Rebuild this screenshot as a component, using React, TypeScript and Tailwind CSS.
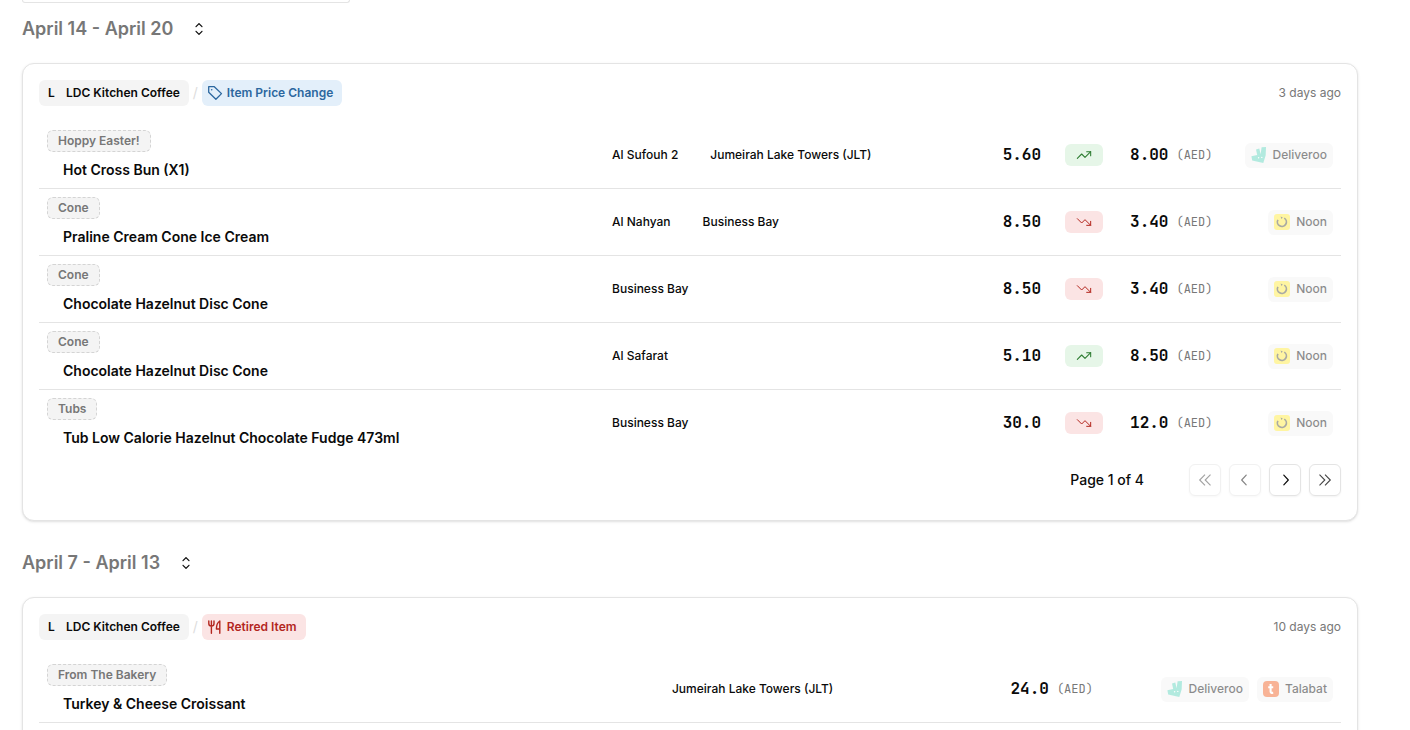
import type { ReactNode } from 'react'
import { RxCaretSort, RxChevronLeft, RxChevronRight } from 'react-icons/rx'
import { TrendingDown, TrendingUp } from 'lucide-react'

type Market = 'Deliveroo' | 'Noon' | 'Talabat'

type Item = {
  category: string
  name: string
  areas: string[]
  price: string
  newPrice?: string
  trend?: 'up' | 'down'
  markets: Market[]
}

const priceChanges: Item[] = [
  { category: 'Hoppy Easter!', name: 'Hot Cross Bun (X1)', areas: ['Al Sufouh 2', 'Jumeirah Lake Towers (JLT)'], price: '5.60', newPrice: '8.00', trend: 'up', markets: ['Deliveroo'] },
  { category: 'Cone', name: 'Praline Cream Cone Ice Cream', areas: ['Al Nahyan', 'Business Bay'], price: '8.50', newPrice: '3.40', trend: 'down', markets: ['Noon'] },
  { category: 'Cone', name: 'Chocolate Hazelnut Disc Cone', areas: ['Business Bay'], price: '8.50', newPrice: '3.40', trend: 'down', markets: ['Noon'] },
  { category: 'Cone', name: 'Chocolate Hazelnut Disc Cone', areas: ['Al Safarat'], price: '5.10', newPrice: '8.50', trend: 'up', markets: ['Noon'] },
  { category: 'Tubs', name: 'Tub Low Calorie Hazelnut Chocolate Fudge 473ml', areas: ['Business Bay'], price: '30.0', newPrice: '12.0', trend: 'down', markets: ['Noon'] },
]

const retiredItems: Item[] = [
  { category: 'From The Bakery', name: 'Turkey & Cheese Croissant', areas: ['Jumeirah Lake Towers (JLT)'], price: '24.0', markets: ['Deliveroo', 'Talabat'] },
]

function TagIcon() {
  return (
    <svg viewBox="0 0 16 16" className="size-4" fill="none" stroke="currentColor" strokeWidth="1.3" strokeLinejoin="round" aria-hidden="true">
      <path d="M1.7 1.7h5.6l7.2 6.9-5.6 5.7-7.2-7z" />
      <circle cx="4.7" cy="4.7" r="0.8" fill="currentColor" stroke="none" />
    </svg>
  )
}

function ForkKnifeIcon() {
  return (
    <svg viewBox="0 0 16 16" className="size-4" fill="none" stroke="currentColor" strokeWidth="1.4" strokeLinecap="round" strokeLinejoin="round" aria-hidden="true">
      <path d="M1.8 2v2.6a2.6 2.6 0 0 0 5.2 0V2M4.4 2v12.2M12.8 14.2V2c-2.2 1.4-3.4 4.2-3.4 8h3.4" />
    </svg>
  )
}

function DoubleChevron({ left }: { left?: boolean }) {
  return (
    <svg viewBox="0 0 16 16" className="size-4" fill="none" stroke="#444444" strokeWidth="1.1" aria-hidden="true">
      <path d={left ? 'M8 2.7 2.7 8 8 13.3M13.5 2.7 8.2 8l5.3 5.3' : 'M8 2.7 13.3 8 8 13.3M2.5 2.7 7.8 8l-5.3 5.3'} />
    </svg>
  )
}

function MarketLogo({ market }: { market: Market }) {
  if (market === 'Deliveroo') {
    return (
      <svg viewBox="0 0 16 16" className="size-4" aria-hidden="true">
        <path d="M10.6 0.3 15 0l-.3 8.2-2.4 7.8L1.2 13.4.4 9.2l5.8-1.1L5 2.4l3.3-.8 1.3 5.7z" fill="#68d7c1" />
        <circle cx="7.6" cy="10.8" r="0.7" fill="#fff" />
        <circle cx="10.8" cy="10.4" r="0.7" fill="#fff" />
      </svg>
    )
  }
  if (market === 'Noon') {
    return (
      <svg viewBox="0 0 16 16" className="size-4" aria-hidden="true">
        <rect width="16" height="16" rx="3" fill="#ffec48" />
        <path d="M3.9 5.8a4.5 4.5 0 1 0 6.4-1.7" fill="none" stroke="#55564c" strokeWidth="1.7" />
        <path d="M6.6 2.6l2.2.8-1.4 1.6z" fill="#55564c" />
      </svg>
    )
  }
  return (
    <svg viewBox="0 0 16 16" className="size-4" aria-hidden="true">
      <rect width="16" height="16" rx="4" fill="#f26a30" />
      <path d="M7.6 3v7.6q0 1.6 2.6 1.2M5.2 6.2h5" fill="none" stroke="#fff" strokeWidth="2.1" />
    </svg>
  )
}

function TrendBadge({ trend }: { trend: 'up' | 'down' }) {
  if (trend === 'up') {
    return (
      <span className="flex h-[22px] w-[38px] items-center justify-center rounded-md bg-[#e6f6e8] text-[#2e7d32]">
        <TrendingUp size={16} strokeWidth={1.6} aria-label="Price up" />
      </span>
    )
  }
  return (
    <span className="flex h-[22px] w-[38px] items-center justify-center rounded-md bg-[#fbe4e4] text-[#b3261e]">
      <TrendingDown size={16} strokeWidth={1.5} aria-label="Price down" />
    </span>
  )
}

type ItemTableProps = { items: Item[]; nameCol: string; areaCol: string; rowClass?: string }

function ItemTable({ items, nameCol, areaCol, rowClass = '' }: ItemTableProps) {
  return (
    <table className="w-full table-fixed">
      <colgroup>
        <col className={nameCol} />
        <col className={areaCol} />
        <col />
      </colgroup>
      <tbody>
        {items.map((item, i) => (
          <tr key={i} className={`border-b border-[#e4e4e4] ${rowClass}`}>
            <td className="p-2">
              <span className="flex h-[22px] w-fit items-center rounded-md border border-dashed border-[#d4d4d4] bg-[#f4f4f4] px-2.5 text-xs font-semibold text-[#777777]">
                {item.category}
              </span>
              <p className="mt-2 truncate px-4 text-sm font-semibold">{item.name}</p>
            </td>
            <td className="p-2">
              <div className="flex gap-8 text-xs font-medium whitespace-nowrap">
                {item.areas.map((area) => (
                  <span key={area}>{area}</span>
                ))}
              </div>
            </td>
            <td className="p-2">
              <div className="flex items-center justify-between">
                <div className="flex items-center font-['JetBrains_Mono','DejaVu_Sans_Mono',monospace]">
                  <span className="font-bold">{item.price}</span>
                  {item.trend && (
                    <div className="flex items-center gap-[27px] pl-6">
                      <TrendBadge trend={item.trend} />
                      <span className="font-bold">{item.newPrice}</span>
                    </div>
                  )}
                  <span className="pl-2 text-xs text-[#777777]">(AED)</span>
                </div>
                <div className="flex gap-2">
                  {item.markets.map((market) => (
                    <span key={market} className="flex h-[25px] items-center gap-1.5 rounded-md bg-[#f4f4f4] px-1.5 text-xs font-medium text-[#171717] opacity-50">
                      <MarketLogo market={market} />
                      {market}
                    </span>
                  ))}
                </div>
              </div>
            </td>
          </tr>
        ))}
      </tbody>
    </table>
  )
}

function PageButton({ label, disabled, children }: { label: string; disabled?: boolean; children: ReactNode }) {
  return (
    <button
      type="button"
      aria-label={label}
      disabled={disabled}
      className="flex size-8 items-center justify-center rounded-md border border-[#e4e4e4] shadow-xs disabled:opacity-50"
    >
      {children}
    </button>
  )
}

function WeekHeading({ children }: { children: ReactNode }) {
  return (
    <div className="flex h-9 items-center gap-4">
      <h2 className="text-lg font-semibold text-[#777777]">{children}</h2>
      <button type="button" aria-label="Toggle week" className="flex size-5 items-center justify-center">
        <RxCaretSort size={20} />
      </button>
    </div>
  )
}

function ChangeCard({ badge, ago, children }: { badge: ReactNode; ago: string; children: ReactNode }) {
  return (
    <section className="rounded-xl border border-[#e4e4e4] bg-white p-4 pb-6 shadow-sm">
      <div className="mb-4 flex items-center justify-between">
        <div className="flex items-center text-xs font-semibold">
          <span className="flex h-[26px] items-center rounded-md bg-[#f4f4f4] px-[9px]">
            <span className="w-[18px]">L</span>
            LDC Kitchen Coffee
          </span>
          <span className="w-[13px] text-center text-sm font-normal text-[#dddddd]">/</span>
          {badge}
        </div>
        <span className="text-xs text-[#777777]">{ago}</span>
      </div>
      {children}
    </section>
  )
}

function App() {
  return (
    <div className="h-screen overflow-hidden bg-white pr-[52px] pl-[22px] font-['Inter',sans-serif] text-[#0a0a0a]">
      <div className="h-[3px] w-[328px] rounded-b-md border border-t-0 border-[#e4e4e4]" />
      <div className="pt-2">
        <WeekHeading>April 14 - April 20</WeekHeading>
      </div>
      <div className="pt-4">
        <ChangeCard
          ago="3 days ago"
          badge={
            <span className="flex h-[26px] items-center gap-1 rounded-md bg-[#e3effa] pr-[9px] pl-[5px] text-[#2c679f]">
              <TagIcon />
              Item Price Change
            </span>
          }
        >
          <ItemTable items={priceChanges} nameCol="w-[43.4%]" areaCol="w-[30%]" rowClass="last:border-0" />
          <div className="mt-2 flex items-center justify-end gap-2">
            <span className="mr-[37px] text-sm font-medium">Page 1 of 4</span>
            <PageButton label="First page" disabled><DoubleChevron left /></PageButton>
            <PageButton label="Previous page" disabled><RxChevronLeft size={18} /></PageButton>
            <PageButton label="Next page"><RxChevronRight size={18} /></PageButton>
            <PageButton label="Last page"><DoubleChevron /></PageButton>
          </div>
        </ChangeCard>
      </div>
      <div className="pt-6">
        <WeekHeading>April 7 - April 13</WeekHeading>
      </div>
      <div className="pt-4">
        <ChangeCard
          ago="10 days ago"
          badge={
            <span className="flex h-[26px] items-center gap-1 rounded-md bg-[#fbe4e4] pr-[9px] pl-[5px] text-[#b3261e]">
              <ForkKnifeIcon />
              Retired Item
            </span>
          }
        >
          <ItemTable items={retiredItems} nameCol="w-[48%]" areaCol="w-[26%]" />
        </ChangeCard>
      </div>
    </div>
  )
}

export default App
